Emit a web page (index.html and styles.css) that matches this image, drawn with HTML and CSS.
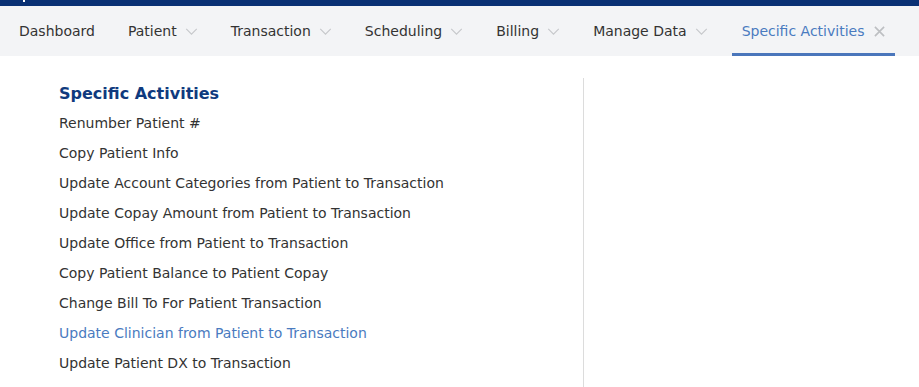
FILE: index.html
```html
<!DOCTYPE html>
<html lang="en">
<head>
<meta charset="UTF-8">
<meta name="viewport" content="width=device-width, initial-scale=1.0">
<title>Specific Activities</title>
<link rel="stylesheet" href="styles.css">
</head>
<body>

<div class="topbar"><span class="topbar-mark"></span></div>

<nav class="menu">
    <div class="menu-item">Dashboard</div>
    <div class="menu-item">Patient <svg class="chev" viewBox="0 0 14 8"><path d="M1 1l6 6 6-6"/></svg></div>
    <div class="menu-item">Transaction <svg class="chev" viewBox="0 0 14 8"><path d="M1 1l6 6 6-6"/></svg></div>
    <div class="menu-item">Scheduling <svg class="chev" viewBox="0 0 14 8"><path d="M1 1l6 6 6-6"/></svg></div>
    <div class="menu-item">Billing <svg class="chev" viewBox="0 0 14 8"><path d="M1 1l6 6 6-6"/></svg></div>
    <div class="menu-item">Manage Data <svg class="chev" viewBox="0 0 14 8"><path d="M1 1l6 6 6-6"/></svg></div>
    <div class="menu-item active">Specific Activities <svg class="close" viewBox="0 0 12 12"><path d="M1 1l10 10M11 1L1 11"/></svg></div>
</nav>

<div class="content">
    <div class="panel">
        <h2>Specific Activities</h2>
        <ul class="activity-list">
            <li>Renumber Patient #</li>
            <li>Copy Patient Info</li>
            <li>Update Account Categories from Patient to Transaction</li>
            <li>Update Copay Amount from Patient to Transaction</li>
            <li>Update Office from Patient to Transaction</li>
            <li>Copy Patient Balance to Patient Copay</li>
            <li>Change Bill To For Patient Transaction</li>
            <li class="hover">Update Clinician from Patient to Transaction</li>
            <li>Update Patient DX to Transaction</li>
        </ul>
    </div>
    <div class="side"></div>
</div>

</body>
</html>
```

FILE: styles.css
```css
body {
    font-family: "DejaVu Sans", Verdana, sans-serif;
    margin: 0;
    color: #333;
    background: #fff;
    overflow: hidden;
}
.topbar {
    height: 6px;
    background-color: #0a3174;
    position: relative;
}
.topbar-mark {
    position: absolute;
    left: 23px;
    top: 0;
    width: 2px;
    height: 2px;
    background: #fff;
}
.menu {
    display: flex;
    gap: 13px;
    height: 50px;
    padding-left: 9px;
    background-color: #f3f4f6;
}
.menu-item {
    display: flex;
    align-items: center;
    padding: 0 10px;
    font-size: 14px;
    color: #333;
    border-bottom: 3px solid transparent;
    padding-top: 3px;
}
.menu-item.active {
    color: #4a7bc0;
    border-bottom-color: #4a76bb;
    margin-left: 1px;
}
.chev {
    width: 13px;
    height: 7px;
    margin-left: 8px;
    fill: none;
    stroke: #c6c8cb;
    stroke-width: 1.3;
}
.close {
    width: 11px;
    height: 11px;
    margin-left: 10px;
    fill: none;
    stroke: #bdbfc2;
    stroke-width: 1.8;
}
.content {
    display: flex;
    padding-top: 22px;
    height: 309px;
}
.panel {
    width: 524px;
    padding-left: 59px;
    border-right: 1px solid #dcdcdc;
}
h2 {
    margin: 0;
    padding-top: 2px;
    font-size: 16px;
    line-height: 28px;
    color: #0f3a7e;
}
.activity-list {
    list-style: none;
    margin: 0;
    padding: 0;
}
.activity-list li {
    font-size: 14px;
    line-height: 30px;
}
.activity-list li.hover {
    color: #4a7bc0;
}
```
